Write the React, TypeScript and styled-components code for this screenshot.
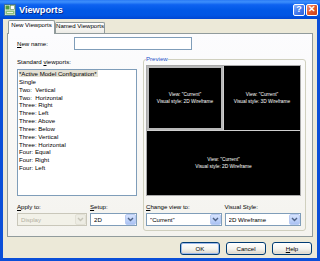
import styled, { createGlobalStyle } from "styled-components";

const GlobalStyle = createGlobalStyle`
  html, body {
    margin: 0;
    padding: 0;
    background: #ffffff;
  }
  body {
    font-family: "Liberation Sans", Arial, sans-serif;
    color: #000;
  }
  * {
    box-sizing: border-box;
  }
`;

// ---------------------------------------------------------------------------
// window chrome
// ---------------------------------------------------------------------------

const Window = styled.div`
  width: 320px;
  height: 261px;
  display: flex;
  flex-direction: column;
  background: #0b4fd8;
  overflow: hidden;
`;

const TitleBar = styled.div`
  height: 19px;
  flex-shrink: 0;
  display: flex;
  align-items: center;
  padding: 0 2px 0 4px;
  gap: 3px;
  background: linear-gradient(
    to bottom,
    #2a7af5 0%,
    #3d8ffc 10%,
    #0e62f0 25%,
    #0057e6 55%,
    #0055e4 80%,
    #0046d2 100%
  );
`;

const Title = styled.span`
  flex: 1;
  color: #fff;
  font-weight: bold;
  font-size: 9.2px;
  line-height: 12px;
  text-shadow: 1px 1px 0 #0a2a8a;
`;

const CaptionButton = styled.div<{ $close?: boolean }>`
  width: 12px;
  height: 12px;
  border: 1px solid #fff;
  border-radius: 2px;
  display: flex;
  align-items: center;
  justify-content: center;
  color: #fff;
  font-weight: bold;
  font-size: 9px;
  line-height: 9px;
  background: ${(p) =>
    p.$close
      ? "linear-gradient(135deg, #f09a7a 0%, #e2582d 45%, #c9401a 100%)"
      : "linear-gradient(135deg, #8db3fa 0%, #4b80f0 45%, #2a5fd9 100%)"};
`;

const CaptionGroup = styled.div`
  display: flex;
  gap: 1px;
`;

const Body = styled.div`
  flex: 1;
  margin: 0 3px 3px;
  background: #ece9d8;
  display: flex;
  flex-direction: column;
  padding: 1px 4px 0;
`;

// ---------------------------------------------------------------------------
// tabs
// ---------------------------------------------------------------------------

const TabStrip = styled.div`
  height: 13px;
  display: flex;
  align-items: flex-end;
  padding-left: 1px;
`;

const Tab = styled.div<{ $active?: boolean }>`
  position: relative;
  z-index: ${(p) => (p.$active ? 1 : 0)};
  width: ${(p) => (p.$active ? 47 : 50)}px;
  height: ${(p) => (p.$active ? 14 : 11)}px;
  margin-bottom: ${(p) => (p.$active ? -1 : 0)}px;
  border: 1px solid #919b9c;
  border-bottom: none;
  border-radius: 2px 2px 0 0;
  background: ${(p) =>
    p.$active ? "#fcfcfe" : "linear-gradient(to bottom, #ffffff, #ecebe5)"};
  font-size: 6.1px;
  line-height: 6px;
  padding-top: ${(p) => (p.$active ? 1 : 0)}px;
  text-align: center;
  white-space: nowrap;
`;

const Panel = styled.div`
  height: 204px;
  border: 1px solid #919b9c;
  background: linear-gradient(to bottom, #fcfcfe, #f4f3ee);
  display: flex;
  flex-direction: column;
  padding: 3px 6px 0 9px;
`;

// ---------------------------------------------------------------------------
// form parts
// ---------------------------------------------------------------------------

const Label = styled.div`
  font-size: 6.1px;
  line-height: 7px;
  height: 7px;
  white-space: nowrap;
`;

const NameRow = styled.div`
  display: flex;
  align-items: center;
  height: 13px;
`;

const NameLabel = styled(Label)`
  width: 57px;
`;

const TextInput = styled.div`
  width: 118px;
  height: 13px;
  border: 1px solid #7f9db9;
  background: #fff;
`;

const Columns = styled.div`
  display: flex;
  gap: 6px;
  margin-top: 5px;
`;

const LeftColumn = styled.div`
  width: 120px;
  padding-top: 3px;
  display: flex;
  flex-direction: column;
`;

const ListBox = styled.div`
  margin-top: 4px;
  height: 127px;
  border: 1px solid #7f9db9;
  background: #fff;
  padding-left: 1px;
`;

const ListItem = styled.div<{ $selected?: boolean }>`
  font-size: 6.1px;
  line-height: 7.85px;
  height: 7.85px;
  white-space: pre;
  span {
    background: ${(p) => (p.$selected ? "#e4e1d4" : "transparent")};
    padding-right: 1px;
  }
`;

const FieldRow = styled.div`
  display: flex;
  gap: 3px;
  margin-top: 7px;
`;

const Field = styled.div<{ $width: number }>`
  width: ${(p) => p.$width}px;
  display: flex;
  flex-direction: column;
  gap: 3px;
`;

const Combo = styled.div<{ $disabled?: boolean }>`
  height: 13px;
  border: 1px solid ${(p) => (p.$disabled ? "#c9c7ba" : "#7f9db9")};
  background: ${(p) => (p.$disabled ? "#f2f1e8" : "#fff")};
  color: ${(p) => (p.$disabled ? "#b2b0a2" : "#000")};
  display: flex;
  align-items: center;
  padding: 0 0 0 3px;
  font-size: 6.1px;
  white-space: nowrap;
`;

const ComboText = styled.span`
  flex: 1;
  overflow: hidden;
`;

const ComboArrow = styled.div<{ $disabled?: boolean }>`
  width: 11px;
  height: 11px;
  border-radius: 2px;
  display: flex;
  align-items: center;
  justify-content: center;
  background: ${(p) =>
    p.$disabled
      ? "#edece3"
      : "linear-gradient(to bottom, #d6e3fd 0%, #bcd0f8 60%, #a9c1f3 100%)"};
  border: 1px solid ${(p) => (p.$disabled ? "#e3e1d6" : "#b9cbf2")};
`;

// ---------------------------------------------------------------------------
// preview group
// ---------------------------------------------------------------------------

const GroupBox = styled.fieldset`
  margin: 0;
  width: 163px;
  height: 176px;
  padding: 0 4px 4px 2px;
  border: 1px solid #d0d0bf;
  border-radius: 3px;
  min-width: 0;
`;

const Legend = styled.legend`
  padding: 0;
  font-size: 6.1px;
  line-height: 8px;
  color: #1e50c8;
`;

const Preview = styled.div`
  margin-top: 2px;
  height: 131px;
  display: grid;
  grid-template-columns: 76px 1fr;
  grid-template-rows: 64px 1fr;
  gap: 1px;
  background: #cfcfcf;
  border: 1px solid #a9a9a9;
`;

const Viewport = styled.div<{ $active?: boolean; $wide?: boolean }>`
  background: #000;
  color: #fff;
  grid-column: ${(p) => (p.$wide ? "1 / span 2" : "auto")};
  border: ${(p) => (p.$active ? "2px solid #b8b8b8" : "none")};
  display: flex;
  flex-direction: column;
  align-items: center;
  justify-content: center;
  font-size: 4.8px;
  line-height: 7.5px;
  white-space: nowrap;
`;

// ---------------------------------------------------------------------------
// buttons
// ---------------------------------------------------------------------------

const ButtonRow = styled.div`
  display: flex;
  justify-content: flex-end;
  gap: 6px;
  margin-top: 5px;
  padding-right: 1px;
`;

const Button = styled.div<{ $default?: boolean }>`
  width: 40px;
  height: 13px;
  border: 1px solid #003c74;
  border-radius: 3px;
  display: flex;
  align-items: center;
  justify-content: center;
  font-size: 6.1px;
  background: linear-gradient(to bottom, #ffffff 0%, #f4f3ee 55%, #d8d3c7 100%);
  box-shadow: ${(p) =>
    p.$default ? "inset 0 0 0 1px #9db9eb" : "inset 0 -1px 0 #e3ded3"};
`;

// ---------------------------------------------------------------------------
// data
// ---------------------------------------------------------------------------

const viewports = [
  "*Active Model Configuration*",
  "Single",
  "Two:  Vertical",
  "Two:  Horizontal",
  "Three: Right",
  "Three: Left",
  "Three: Above",
  "Three: Below",
  "Three: Vertical",
  "Three: Horizontal",
  "Four: Equal",
  "Four: Right",
  "Four: Left",
];

const Chevron = ({ color }: { color: string }) => (
  <svg width="7" height="5" viewBox="0 0 7 5">
    <path d="M1 1 L3.5 3.5 L6 1" fill="none" stroke={color} strokeWidth="1.4" />
  </svg>
);

const AppIcon = () => (
  <svg width="12" height="12" viewBox="0 0 12 12">
    <rect x="0.5" y="0.5" width="11" height="11" fill="#e7f1e6" stroke="#3c6e9c" />
    <rect x="1.5" y="1.5" width="4" height="4" fill="#4e9a3c" />
    <rect x="6.5" y="1.5" width="4" height="4" fill="#ffffff" stroke="#5b8a4a" strokeWidth="0.6" />
    <rect x="1.5" y="6.5" width="9" height="4" fill="#8fc27b" />
    <path d="M3 8.5 L9 8.5" stroke="#ffffff" strokeWidth="0.8" />
  </svg>
);

function ComboBox({
  value,
  disabled,
}: {
  value: string;
  disabled?: boolean;
}) {
  return (
    <Combo $disabled={disabled}>
      <ComboText>{value}</ComboText>
      <ComboArrow $disabled={disabled}>
        <Chevron color={disabled ? "#c7c5b8" : "#4d6185"} />
      </ComboArrow>
    </Combo>
  );
}

export default function App() {
  return (
    <>
      <GlobalStyle />
      <Window>
        <TitleBar>
          <AppIcon />
          <Title>Viewports</Title>
          <CaptionGroup>
            <CaptionButton>?</CaptionButton>
            <CaptionButton $close>✕</CaptionButton>
          </CaptionGroup>
        </TitleBar>

        <Body>
          <TabStrip>
            <Tab $active>New Viewports</Tab>
            <Tab>Named Viewports</Tab>
          </TabStrip>

          <Panel>
            <NameRow>
              <NameLabel>
                <u>N</u>ew name:
              </NameLabel>
              <TextInput />
            </NameRow>

            <Columns>
              <LeftColumn>
                <Label>
                  Standard <u>v</u>iewports:
                </Label>
                <ListBox>
                  {viewports.map((v, i) => (
                    <ListItem key={v} $selected={i === 0}>
                      <span>{v}</span>
                    </ListItem>
                  ))}
                </ListBox>
                <FieldRow>
                  <Field $width={70}>
                    <Label>
                      <u>A</u>pply to:
                    </Label>
                    <ComboBox value="Display" disabled />
                  </Field>
                  <Field $width={47}>
                    <Label>
                      <u>S</u>etup:
                    </Label>
                    <ComboBox value="2D" />
                  </Field>
                </FieldRow>
              </LeftColumn>

              <GroupBox>
                <Legend>Preview</Legend>
                <Preview>
                  <Viewport $active>
                    <span>View: "Current"</span>
                    <span>Visual style: 2D Wireframe</span>
                  </Viewport>
                  <Viewport>
                    <span>View: "Current"</span>
                    <span>Visual style: 3D Wireframe</span>
                  </Viewport>
                  <Viewport $wide>
                    <span>View: "Current"</span>
                    <span>Visual style: 2D Wireframe</span>
                  </Viewport>
                </Preview>
                <FieldRow>
                  <Field $width={76}>
                    <Label>
                      <u>C</u>hange view to:
                    </Label>
                    <ComboBox value={'"Current"'} />
                  </Field>
                  <Field $width={77}>
                    <Label>Visual Style:</Label>
                    <ComboBox value="2D Wireframe" />
                  </Field>
                </FieldRow>
              </GroupBox>
            </Columns>
          </Panel>

          <ButtonRow>
            <Button $default>OK</Button>
            <Button>Cancel</Button>
            <Button>
              <u>H</u>elp
            </Button>
          </ButtonRow>
        </Body>
      </Window>
    </>
  );
}
